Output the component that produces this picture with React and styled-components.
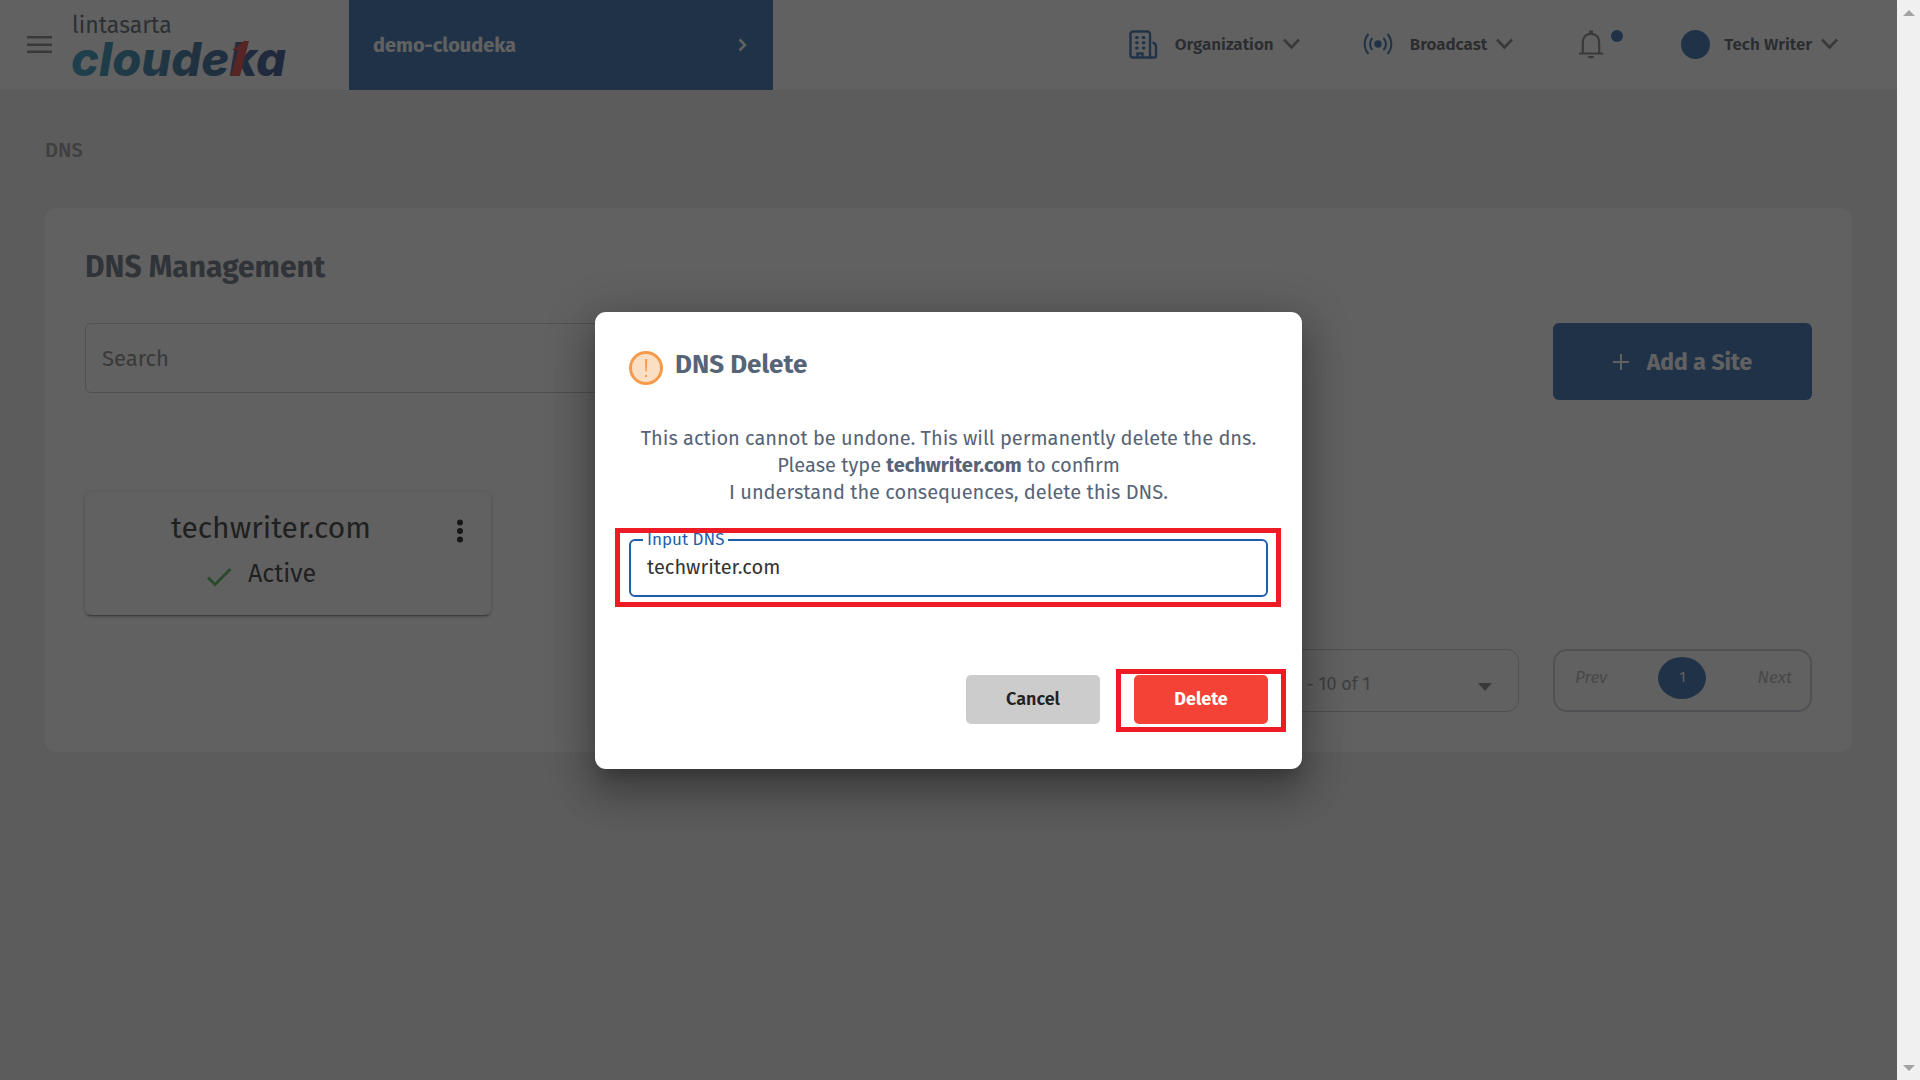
import React, { useState } from 'react';
import styled, { createGlobalStyle } from 'styled-components';

const blue = '#1f5fa9';
const slate = '#566476';
const marker = '#ed1c24';

const GlobalStyle = createGlobalStyle`
  * {
    box-sizing: border-box;
  }

  body {
    margin: 0;
    font-family: 'Fira Sans', Roboto, sans-serif;
    color: #222;
  }

  button,
  input,
  select {
    font-family: inherit;
  }

  h1,
  h2,
  h3,
  p {
    margin: 0;
  }
`;

const Window = styled.div`
  display: flex;
  height: 100vh;
  overflow: hidden;
`;

const Viewport = styled.div`
  flex: 1;
  position: relative;
  background: #ededed;
`;

const Scrollbar = styled.div`
  width: 23px;
  padding: 10px 5px 9px;
  display: flex;
  flex-direction: column;
  justify-content: space-between;
  align-items: center;
  background: #f0f0f0;
`;

const Header = styled.header`
  display: flex;
  align-items: center;
  height: 90px;
  padding: 0 59px 0 26px;
  background: #fff;
`;

const IconButton = styled.button`
  display: flex;
  padding: 0;
  border: none;
  background: none;
  cursor: pointer;
`;

const LogoLink = styled.a`
  display: flex;
  width: 276px;
  margin-left: 20px;
`;

const Project = styled.button`
  display: flex;
  align-items: center;
  justify-content: space-between;
  align-self: stretch;
  width: 424px;
  padding: 0 24px;
  border: none;
  background: ${blue};
  color: #fff;
  font-size: 20px;
  font-weight: 700;
`;

const Nav = styled.nav`
  flex: 1;
  display: flex;
  align-items: center;
  justify-content: flex-end;
  gap: 63px;
`;

const NavItem = styled.button`
  display: flex;
  align-items: center;
  gap: 9px;
  padding: 0 0 2px;
  border: none;
  background: none;
  color: #444b57;
  font-size: 17px;
  font-weight: 600;

  svg:first-child {
    margin-right: 8px;
  }
`;

const Bell = styled(IconButton)`
  gap: 8px;
  margin: 0 -5px 0 3px;
  padding-bottom: 2px;
`;

const Dot = styled.span`
  width: 12px;
  height: 12px;
  border-radius: 50%;
  background: ${blue};
`;

const Avatar = styled.span`
  width: 29px;
  height: 29px;
  margin-right: 5px;
  border-radius: 50%;
  background: ${blue};
`;

const Main = styled.main`
  padding: 48px 45px;
`;

const Breadcrumb = styled.p`
  color: #8a8a8a;
  font-size: 20px;
  font-weight: 500;
  line-height: 24px;
`;

const Panel = styled.section`
  margin-top: 46px;
  padding: 40px;
  border-radius: 12px;
  background: #fff;
`;

const PanelTitle = styled.h1`
  color: ${slate};
  font-size: 30px;
  line-height: 38px;
`;

const Toolbar = styled.div`
  display: flex;
  justify-content: space-between;
  align-items: flex-start;
  margin-top: 37px;
`;

const Search = styled.input`
  width: 40%;
  height: 70px;
  padding: 0 16px;
  border: 1px solid #c4c4c4;
  border-radius: 6px;
  background: none;
  font-size: 22px;

  &::placeholder {
    color: #777;
    opacity: 1;
  }
`;

const AddButton = styled.button`
  display: flex;
  align-items: center;
  justify-content: center;
  gap: 18px;
  width: 259px;
  height: 77px;
  border: none;
  border-radius: 6px;
  background: ${blue};
  color: #fff;
  font-size: 23px;
  font-weight: 700;
`;

const Site = styled.article`
  display: flex;
  align-items: flex-start;
  width: 406px;
  height: 123px;
  margin-top: 92px;
  padding: 18px 16px 18px 12px;
  border-radius: 6px;
  box-shadow: 0 3px 1px -2px rgba(0, 0, 0, 0.3), 0 2px 2px rgba(0, 0, 0, 0.2),
    0 1px 5px rgba(0, 0, 0, 0.18);

  ${IconButton} {
    margin-top: 9px;
  }
`;

const SiteInfo = styled.div`
  flex: 1;
  text-align: center;
`;

const SiteName = styled.h2`
  font-size: 30px;
  font-weight: 400;
  line-height: 36px;
`;

const Status = styled.p`
  display: flex;
  align-items: center;
  justify-content: center;
  gap: 16px;
  margin-top: 12px;
  padding-right: 20px;
  font-size: 25px;
  line-height: 32px;

  svg {
    margin-top: 6px;
  }
`;

const Paging = styled.div`
  display: flex;
  justify-content: flex-end;
  gap: 34px;
  margin-top: 34px;
`;

const PageSize = styled.label`
  display: flex;
  align-items: center;
  width: 280px;
  height: 63px;
  padding-right: 26px;
  border: 1px solid #c4c4c4;
  border-radius: 12px;

  select {
    flex: 1;
    padding: 6px 0 0 54px;
    border: none;
    background: none;
    color: #8a8a8a;
    font-size: 18px;
    appearance: none;
  }

  svg {
    margin-top: 12px;
  }
`;

const Pages = styled.div`
  display: flex;
  align-items: center;
  justify-content: space-between;
  width: 259px;
  height: 63px;
  padding: 0 18px 6px 20px;
  border: 2px solid #c8c8d4;
  border-radius: 14px;
`;

const PageStep = styled.button`
  padding: 0;
  border: none;
  background: none;
  color: #aaa;
  font-size: 17px;
  font-style: italic;
`;

const PageNumber = styled.button`
  width: 48px;
  height: 42px;
  padding: 0;
  border: none;
  border-radius: 50%;
  background: ${blue};
  color: #fff;
  font-size: 14px;
`;

const Overlay = styled.div`
  position: absolute;
  inset: 0;
  display: flex;
  align-items: center;
  justify-content: center;
  background: rgba(33, 33, 33, 0.71);
`;

const Dialog = styled.div`
  width: 707px;
  padding: 34px 34px 45px;
  border-radius: 11px;
  background: #fff;
  box-shadow: 0 11px 15px -7px rgba(0, 0, 0, 0.2),
    0 24px 38px 3px rgba(0, 0, 0, 0.2), 0 9px 46px 8px rgba(0, 0, 0, 0.18);
`;

const DialogTitle = styled.div`
  display: flex;
  align-items: flex-start;
  gap: 12px;
  color: ${slate};

  svg {
    margin-top: 5px;
  }

  h2 {
    font-size: 26px;
    line-height: 38px;
  }
`;

const Message = styled.p`
  margin-top: 40px;
  color: ${slate};
  font-size: 20px;
  line-height: 27px;
  text-align: center;
`;

const Marked = styled.div`
  position: relative;

  &::after {
    content: '';
    position: absolute;
    inset: ${(props) => props.$inset};
    border: 5px solid ${marker};
    pointer-events: none;
  }
`;

const Field = styled.fieldset`
  height: 66px;
  margin: 25px 0 0;
  padding: 0 12px;
  border: 2px solid ${blue};
  border-radius: 6px;

  legend {
    padding: 0 4px;
    color: ${blue};
    font-size: 17px;
    line-height: 18px;
  }

  input {
    width: 100%;
    height: 36px;
    padding: 0 4px;
    border: none;
    outline: none;
    background: none;
    color: #333;
    font-size: 20px;
  }
`;

const Actions = styled.div`
  display: flex;
  justify-content: flex-end;
  gap: 34px;
  margin-top: 78px;
`;

const ActionButton = styled.button`
  width: 134px;
  height: 49px;
  border: none;
  border-radius: 5px;
  background: ${(props) => (props.$danger ? '#f44336' : '#ccc')};
  color: ${(props) => (props.$danger ? '#fff' : '#222')};
  font-size: 18px;
  font-weight: ${(props) => (props.$danger ? 700 : 600)};
`;

const Logo = () => (
  <svg
    width='213'
    height='66'
    viewBox='0 0 213 66'
    overflow='visible'
    role='img'
    aria-label='lintasarta cloudeka'
  >
    <defs>
      <linearGradient id='sea' gradientUnits='userSpaceOnUse' x1='0' y1='0' x2='213' y2='0'>
        <stop offset='0' stopColor='#1b8fb8' />
        <stop offset='0.6' stopColor='#1f5a8c' />
        <stop offset='1' stopColor='#1c3a80' />
      </linearGradient>
    </defs>
    <text x='-1' y='21' fontFamily="'Fira Sans', Roboto, sans-serif" fontSize='23' fill='#4a5560'>
      lintasarta
    </text>
    <text
      x='-2'
      y='64'
      fontFamily='Inter, sans-serif'
      fontSize='47'
      fontWeight='800'
      fontStyle='italic'
      fill='url(#sea)'
    >
      cloudeka
    </text>
    <path d='M158 64 L165 38 H159 L171 29 H176 L167 64 Z' fill='#d8322f' />
  </svg>
);

const Chevron = () => (
  <svg width='17' height='12' viewBox='0 0 17 12' fill='none' stroke='#777' strokeWidth='2.600'>
    <path d='M1 1.500 L8.500 9.500 L16 1.500' />
  </svg>
);

const MenuIcon = () => (
  <svg width='27' height='18' viewBox='0 0 27 18' fill='#777'>
    <path d='M1 0h25v2.500H1zM1 7.500h25V10H1zM1 14.500h25V17H1z' />
  </svg>
);

const BuildingIcon = () => (
  <svg width='29' height='29' viewBox='0 0 29 29' fill='none' stroke={blue} strokeWidth='2.400'>
    <path d='M21 27.500H3.500a2 2 0 0 1-2-2V4a2.500 2.500 0 0 1 2.500-2.500h14.500A2.500 2.500 0 0 1 21 4z' />
    <path d='M8.500 27v-3.500h5V27M23.500 12.500c2 .5 3.500 1.500 3.500 4v9a2 2 0 0 1-2 2h-4' />
    <path
      d='M7.500 7.500h.8M14.200 7.500h.8M7.500 12.700h.8M14.200 12.700h.8M7.500 18h.8M14.200 18h.8'
      strokeWidth='3'
      strokeLinecap='round'
    />
  </svg>
);

const BroadcastIcon = () => (
  <svg width='30' height='22' viewBox='0 0 30 22' fill='none' stroke={blue} strokeWidth='2'>
    <circle cx='15' cy='11' r='3.700' fill={blue} stroke='none' />
    <path d='M9.500 5a8.500 8.500 0 0 0 0 12M20.500 5a8.500 8.500 0 0 1 0 12M5.500 1a15 15 0 0 0 0 20M24.500 1a15 15 0 0 1 0 20' />
  </svg>
);

const BellIcon = () => (
  <svg width='24' height='29' viewBox='0 0 24 29' fill='none' stroke='#777' strokeWidth='2.200'>
    <path d='M0 23.500h24M3.800 23.500V12.500C3.800 7 7 3.800 12 3.800s8.200 3.200 8.200 8.700v11' />
    <path d='M12 0.500v3.500' strokeWidth='4' />
    <path d='M9 26h6a3 2.500 0 0 1-6 0z' fill='#777' stroke='none' />
  </svg>
);

const WarningIcon = () => (
  <svg width='34' height='34' viewBox='0 0 34 34'>
    <circle cx='17' cy='17' r='15.500' fill='#fbdfc5' stroke='#f59a4a' strokeWidth='3' />
    <path d='M16 8h2.200l-.4 12.500h-1.400zM16 24h2v2h-2z' fill='#f59a4a' />
  </svg>
);

const App = () => {
  const [dns, setDns] = useState('techwriter.com');

  return (
    <Window>
      <GlobalStyle />
      <Viewport>
        <Header>
          <IconButton aria-label='Menu'>
            <MenuIcon />
          </IconButton>
          <LogoLink href='/'>
            <Logo />
          </LogoLink>
          <Project>
            demo-cloudeka
            <svg width='13' height='14' viewBox='0 0 13 14' fill='none' stroke='#fff' strokeWidth='2.500'>
              <path d='M3.500 1.500 L9 7 L3.500 12.500' />
            </svg>
          </Project>
          <Nav>
            <NavItem>
              <BuildingIcon />
              Organization
              <Chevron />
            </NavItem>
            <NavItem>
              <BroadcastIcon />
              Broadcast
              <Chevron />
            </NavItem>
            <Bell aria-label='Notifications'>
              <BellIcon />
              <Dot />
            </Bell>
            <NavItem>
              <Avatar />
              Tech Writer
              <Chevron />
            </NavItem>
          </Nav>
        </Header>

        <Main>
          <Breadcrumb>DNS</Breadcrumb>
          <Panel>
            <PanelTitle>DNS Management</PanelTitle>
            <Toolbar>
              <Search placeholder='Search' aria-label='Search' />
              <AddButton>
                <svg width='16' height='16' viewBox='0 0 16 16' stroke='#fff' strokeWidth='2'>
                  <path d='M8 0v16M0 8h16' />
                </svg>
                Add a Site
              </AddButton>
            </Toolbar>
            <Site>
              <SiteInfo>
                <SiteName>techwriter.com</SiteName>
                <Status>
                  <svg width='26' height='20' viewBox='0 0 26 20' fill='none' stroke='#3fae49' strokeWidth='3'>
                    <path d='M2 10.500 L9 17.500 L24.500 2' />
                  </svg>
                  Active
                </Status>
              </SiteInfo>
              <IconButton aria-label='Site options'>
                <svg width='30' height='24' viewBox='0 0 30 24' fill='#000'>
                  <circle cx='15' cy='3.500' r='3' />
                  <circle cx='15' cy='12' r='3' />
                  <circle cx='15' cy='20.500' r='3' />
                </svg>
              </IconButton>
            </Site>
            <Paging>
              <PageSize>
                <select aria-label='Rows shown'>
                  <option>1 - 10 of 1</option>
                </select>
                <svg width='14' height='8' viewBox='0 0 14 8' fill='#777'>
                  <path d='M0 0h14L7 8z' />
                </svg>
              </PageSize>
              <Pages>
                <PageStep>Prev</PageStep>
                <PageNumber>1</PageNumber>
                <PageStep>Next</PageStep>
              </Pages>
            </Paging>
          </Panel>
        </Main>

        <Overlay>
          <Dialog role='dialog' aria-labelledby='dialog-title'>
            <DialogTitle>
              <WarningIcon />
              <h2 id='dialog-title'>DNS Delete</h2>
            </DialogTitle>
            <Message>
              This action cannot be undone. This will permanently delete the dns.
              <br />
              Please type <strong>techwriter.com</strong> to confirm
              <br />
              I understand the consequences, delete this DNS.
            </Message>
            <Marked $inset='-3px -13px -10px -14px'>
              <Field>
                <legend>
                  <label htmlFor='dns'>Input DNS</label>
                </legend>
                <input id='dns' value={dns} onChange={(e) => setDns(e.target.value)} />
              </Field>
            </Marked>
            <Actions>
              <ActionButton>Cancel</ActionButton>
              <Marked $inset='-6px -18px -8px'>
                <ActionButton $danger>Delete</ActionButton>
              </Marked>
            </Actions>
          </Dialog>
        </Overlay>
      </Viewport>
      <Scrollbar aria-hidden='true'>
        <svg width='12' height='6' viewBox='0 0 12 6' fill='#a3a3a3'>
          <path d='M0 6h12L6 0z' />
        </svg>
        <svg width='12' height='6' viewBox='0 0 12 6' fill='#a3a3a3'>
          <path d='M0 0h12L6 6z' />
        </svg>
      </Scrollbar>
    </Window>
  );
};

export default App;
